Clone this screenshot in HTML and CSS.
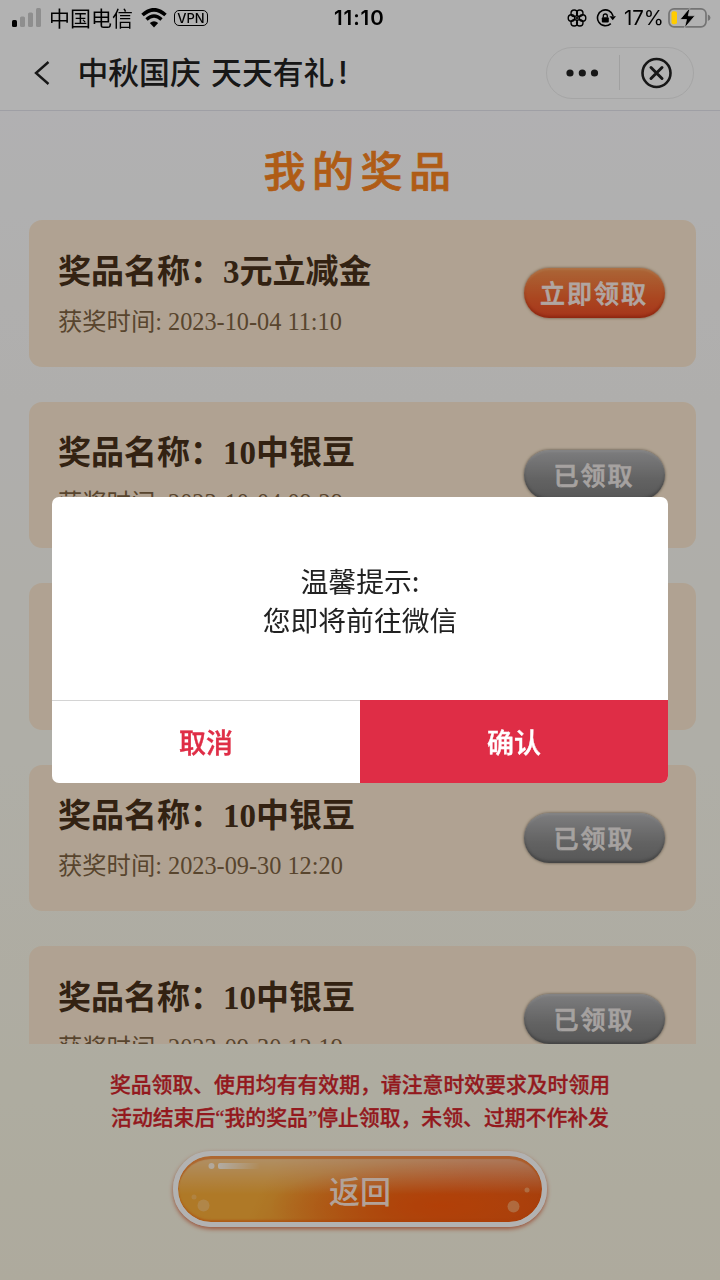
FILE: index.html
```html
<!DOCTYPE html>
<html lang="zh-CN">
<head>
<meta charset="utf-8">
<title>我的奖品</title>
<link rel="stylesheet" href="styles.css">
</head>
<body>

<div class="status-bar">
  <svg class="signal" width="30" height="20" viewBox="0 0 30 20">
    <rect x="0" y="12" width="5" height="7" rx="1.5"/>
    <rect x="8" y="8.5" width="5" height="10.500" rx="1.5" fill="#8e8e8e"/>
    <rect x="16" y="4.500" width="5" height="14.500" rx="1.5" fill="#8e8e8e"/>
    <rect x="24" y="0" width="5" height="19" rx="1.5" fill="#8e8e8e"/>
  </svg>
  <span class="carrier">中国电信</span>
  <svg class="wifi" width="26" height="20" viewBox="0 0 26 20">
    <path d="M1.500 7 Q13 -3.500 24.500 7" fill="none" stroke="#000" stroke-width="3.600"/>
    <path d="M5.500 11.500 Q13 4.500 20.500 11.500" fill="none" stroke="#000" stroke-width="3.300"/>
    <path d="M8.800 15 Q13 11.600 17.200 15 L13 19.400 Z"/>
  </svg>
  <span class="vpn">VPN</span>
  <span class="clock">11:10</span>
  <div class="status-right">
    <svg width="20" height="20" viewBox="-10 -10 20 20" fill="none" stroke="#000" stroke-width="1.400">
      <circle cx="5.600" cy="0" r="3.200"/>
      <circle cx="2.800" cy="4.850" r="3.200"/>
      <circle cx="-2.800" cy="4.850" r="3.200"/>
      <circle cx="-5.600" cy="0" r="3.200"/>
      <circle cx="-2.800" cy="-4.850" r="3.200"/>
      <circle cx="2.800" cy="-4.850" r="3.200"/>
      <path d="M0 -3 V3 M-2.600 -1.500 L2.600 1.500 M-2.600 1.500 L2.600 -1.500" stroke-width="0.900"/>
    </svg>
    <svg class="lock" width="20" height="20" viewBox="0 0 20 20">
      <path d="M14.800 15.600 A7.900 7.900 0 1 1 17.100 8" fill="none" stroke="#000" stroke-width="1.600"/>
      <path d="M13.500 8.300 L20 8.300 L16.700 12.300 Z"/>
      <rect x="5.800" y="9.300" width="7" height="5.200" rx="1"/>
      <path d="M7.300 9.500 V8 A2 2 0 0 1 11.300 8 V9.500" fill="none" stroke="#000" stroke-width="1.300"/>
    </svg>
    <span class="percent">17%</span>
    <svg width="43" height="22" viewBox="0 0 43 22">
      <rect x="1" y="1.800" width="37" height="18" rx="5" fill="none" stroke="#747474" stroke-width="1.700"/>
      <rect x="3.500" y="4.300" width="5.500" height="13" rx="2" fill="#ffcc00"/>
      <path d="M39.800 7.500 Q42.500 8.500 42.500 10.800 Q42.500 13 39.800 14 Z" fill="#747474"/>
      <path d="M22 0.500 L12 12.500 H18.500 L16.500 21 L27 8.800 H20.300 Z" stroke="#b2b2b2" stroke-width="0.800"/>
    </svg>
  </div>
</div>

<div class="page">
  <div class="nav-bar">
    <svg class="back" width="16" height="24" viewBox="0 0 16 24">
      <path d="M14.500 1 L2 12 L14.500 23" fill="none" stroke="#222" stroke-width="2.400"/>
    </svg>
    <span class="nav-title">中秋国庆 天天有礼<span class="mark">!</span></span>
    <div class="capsule">
      <svg width="72" height="34" viewBox="0 0 72 34" fill="#222">
        <circle cx="23" cy="17" r="3.600"/>
        <circle cx="35.300" cy="17" r="3.600"/>
        <circle cx="47.500" cy="17" r="3.600"/>
      </svg>
      <span class="capsule-line"></span>
      <svg width="73" height="34" viewBox="0 0 73 34" fill="none" stroke="#222">
        <circle cx="36.500" cy="17" r="14" stroke-width="2.600"/>
        <path d="M31 11.500 L42 22.500 M42 11.500 L31 22.500" stroke-width="3" stroke-linecap="round"/>
      </svg>
    </div>
  </div>

  <h1 class="heading">我的奖品</h1>

  <div class="prize-list">
    <div class="prize">
      <div class="prize-info">
        <div class="prize-name">奖品名称：3元立减金</div>
        <div class="prize-time">获奖时间: 2023-10-04 11:10</div>
      </div>
      <a class="prize-btn">立即领取</a>
    </div>
    <div class="prize">
      <div class="prize-info">
        <div class="prize-name">奖品名称：10中银豆</div>
        <div class="prize-time">获奖时间: 2023-10-04 09:29</div>
      </div>
      <a class="prize-btn received">已领取</a>
    </div>
    <div class="prize">
    </div>
    <div class="prize">
      <div class="prize-info">
        <div class="prize-name">奖品名称：10中银豆</div>
        <div class="prize-time">获奖时间: 2023-09-30 12:20</div>
      </div>
      <a class="prize-btn received">已领取</a>
    </div>
    <div class="prize">
      <div class="prize-info">
        <div class="prize-name">奖品名称：10中银豆</div>
        <div class="prize-time">获奖时间: 2023-09-30 12:19</div>
      </div>
      <a class="prize-btn received">已领取</a>
    </div>
  </div>

  <p class="notice">奖品领取、使用均有有效期，请注意时效要求及时领用<br>活动结束后“我的奖品”停止领取，未领、过期不作补发</p>

  <a class="return-btn">
    <svg class="shine" width="364" height="66" viewBox="0 0 364 66">
      <defs>
        <linearGradient id="streak">
          <stop offset="0" stop-color="#fff" stop-opacity=".85"/>
          <stop offset="1" stop-color="#fff" stop-opacity="0"/>
        </linearGradient>
      </defs>
      <circle cx="33.500" cy="10" r="3" fill="#fff" opacity=".75"/>
      <rect x="40" y="7" width="42" height="6" rx="2" fill="url(#streak)"/>
      <circle cx="25.500" cy="49.500" r="6" fill="#ffd39a" opacity=".5"/>
      <circle cx="16" cy="41" r="2.500" fill="#ffd39a" opacity=".4"/>
      <circle cx="335.500" cy="50.500" r="6" fill="#ffc08a" opacity=".6"/>
      <circle cx="349" cy="34" r="2.500" fill="#ffc08a" opacity=".6"/>
    </svg>
    <span class="return-text">返回</span>
  </a>
</div>

<div class="mask">
  <div class="dialog">
    <div class="dialog-body">温馨提示:<br>您即将前往微信</div>
    <div class="dialog-footer">
      <a class="cancel">取消</a>
      <a class="confirm">确认</a>
    </div>
  </div>
</div>

</body>
</html>
```
FILE: styles.css
```css
body {
  margin: 0;
  height: 1280px;
  overflow: hidden;
  font-family: "Noto Sans CJK SC", sans-serif;
  background-color: white;
}

/* status bar stays above the mask */
.status-bar {
  position: fixed;
  top: 0;
  left: 0;
  z-index: 20;
  width: 720px;
  height: 36px;
  box-sizing: border-box;
  padding: 0 9px 0 12px;
  display: flex;
  align-items: center;
  color: black;
}

.signal {
  margin-top: -1px;
}

.carrier {
  margin-left: 7px;
  margin-top: -3px;
  font-size: 21px;
  line-height: 36px;
}

.wifi {
  margin-left: 8px;
  margin-top: -1px;
}

.vpn {
  margin-left: 7px;
  margin-top: -1px;
  width: 32px;
  height: 14px;
  border: 1.5px solid black;
  border-radius: 5px;
  font: 500 13px/15px Inter, sans-serif;
  text-align: center;
}

.clock {
  margin-left: 126px;
  font: 600 20.500px/36px Inter, sans-serif;
  letter-spacing: 0.9px;
}

.status-right {
  margin-left: auto;
  display: flex;
  align-items: center;
}

.lock {
  margin-left: 9px;
}

.percent {
  margin: 0 4px 0 8px;
  font: 400 20.500px/36px Inter, sans-serif;
}

.page {
  height: 1280px;
  display: flex;
  flex-direction: column;
  background: linear-gradient(#fefdff 110px, #fbfaf7 400px, #fbf9ef 760px, #faf6e5 1100px, #f9f4e1);
}

.nav-bar {
  height: 111px;
  box-sizing: border-box;
  padding: 36px 26px 1px 34px;
  border-bottom: 1px solid #e4e4ec;
  background-color: white;
  display: flex;
  align-items: center;
  flex-shrink: 0;
}

.nav-title {
  margin-left: 27.500px;
  margin-top: -2px;
  font-size: 30.8px;
  font-weight: 500;
  line-height: 40px;
  word-spacing: 3.500px;
  color: #222;
}

.mark {
  margin-left: 4px;
  font-family: Inter, sans-serif;
}

.capsule {
  margin-left: auto;
  height: 50px;
  border: 1px solid #ededed;
  border-radius: 26px;
  display: flex;
  align-items: center;
}

.capsule-line {
  width: 1px;
  height: 35px;
  background-color: #e6e6e6;
}

.heading {
  margin: 26px 0 0 1px;
  font-size: 42px;
  font-weight: 500;
  line-height: 64px;
  letter-spacing: 6.5px;
  text-align: center;
  color: #fb8520;
  -webkit-text-stroke: 0.7px #fb8520;
}

.prize-list {
  margin: 19px 24.500px 0 29px;
  height: 824px;
  overflow: hidden;
}

.prize {
  height: 146.500px;
  margin-bottom: 35px;
  box-sizing: border-box;
  padding: 0 31px 0 29px;
  border-radius: 13px;
  background-color: #fce9d1;
  display: flex;
  align-items: center;
  justify-content: space-between;
  font-family: "Liberation Serif", "Noto Sans CJK SC", serif;
}

.prize-info {
  padding-top: 7px;
}

.prize-name {
  font-size: 33px;
  font-weight: 600;
  line-height: 50px;
  color: #49321a;
}

.prize-time {
  font-size: 24.300px;
  line-height: 50px;
  color: #7f6343;
}

.prize-btn {
  width: 141px;
  height: 50px;
  border-radius: 25px;
  background: linear-gradient(#f5924f, #f4652f 60%, #ee4c27);
  box-shadow: 0 0 3px rgba(120, 60, 20, 0.7), inset 0 -2px 3px rgba(150, 25, 0, 0.4), inset 0 2px 2px rgba(255, 190, 130, 0.4);
  font: 500 25px/49px "Noto Sans CJK SC", sans-serif;
  letter-spacing: 2px;
  text-align: center;
  color: #fdeee9;
  -webkit-text-stroke: 0.6px #fdeee9;
}

.received {
  background: linear-gradient(#b4b4b6, #8d8d8d 60%, #7d7d7d);
  box-shadow: 0 0 3px rgba(60, 50, 40, 0.7), inset 0 -2px 3px rgba(50, 50, 50, 0.4), inset 0 2px 2px rgba(220, 220, 220, 0.3);
  color: #eee8e6;
  -webkit-text-stroke: 0.6px #eee8e6;
}

.notice {
  margin: 25px 0 0;
  font: 500 20.850px/33px "Liberation Serif", "Noto Sans CJK SC", serif;
  text-align: center;
  color: #d3242b;
  -webkit-text-stroke: 0.3px #d3242b;
}

.return-btn {
  margin: 16px auto 0;
  width: 364px;
  height: 66px;
  border: 5px solid #ffffff;
  border-radius: 38px;
  box-shadow: 0 2px 4px rgba(215, 90, 50, 0.8), inset 0 3px 1px rgba(245, 110, 20, 0.6), inset 0 -2px 2px rgba(245, 90, 10, 0.5);
  background:
    linear-gradient(rgba(255, 225, 200, 0.65), rgba(255, 225, 200, 0) 58%),
    radial-gradient(ellipse 170px 45px at 72% 75%, #ff5b0b, rgba(255, 91, 11, 0)),
    linear-gradient(115deg, #fbae38 25%, #f27a1e 58%, #f0641a 75%, #e95a15);
  background-clip: padding-box;
  display: grid;
}

.shine,
.return-text {
  grid-area: 1 / 1;
}

.return-text {
  font-size: 31px;
  font-weight: 500;
  line-height: 67px;
  text-align: center;
  color: #ffe9dc;
}

.mask {
  position: fixed;
  top: 0;
  left: 0;
  width: 720px;
  height: 1280px;
  background-color: rgba(0, 0, 0, 0.3);
  display: flex;
  align-items: center;
  justify-content: center;
}

.dialog {
  width: 616px;
  height: 286px;
  border-radius: 7px;
  background-color: white;
  overflow: hidden;
}

.dialog-body {
  height: 203px;
  box-sizing: border-box;
  padding-top: 64px;
  font-size: 27.800px;
  line-height: 39px;
  text-align: center;
  color: #222;
}

.dialog-footer {
  display: flex;
  height: 83px;
  font-size: 27px;
  font-weight: 500;
  line-height: 83px;
  text-align: center;
}

.cancel {
  flex: 1;
  box-sizing: border-box;
  border-top: 1px solid #d4d4d4;
  line-height: 82px;
  color: #df2d46;
  -webkit-text-stroke: 0.4px #df2d46;
}

.confirm {
  flex: 1;
  background-color: #df2d46;
  color: white;
  -webkit-text-stroke: 0.4px white;
}
```
